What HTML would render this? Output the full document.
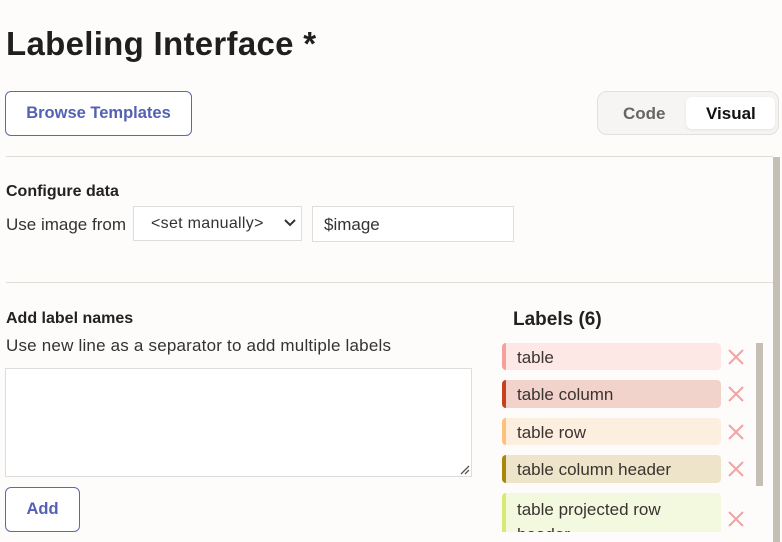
<!DOCTYPE html>
<html><head><meta charset="utf-8"><style>
*{box-sizing:border-box;margin:0;padding:0}
body{width:782px;height:542px;overflow:hidden;background:#fdfcfb;font-family:"Liberation Sans",sans-serif;color:#222;position:relative}
.a{position:absolute}
h1{position:absolute;left:6px;top:25px;font-size:33px;font-weight:bold;color:#1f1f1f;letter-spacing:0.3px}
.btn{position:absolute;border:1px solid #5b6aa8;border-radius:6px;background:#fff;color:#5361b3;font-weight:bold;font-size:16.5px;display:flex;align-items:center;justify-content:center}
.hr{position:absolute;left:6px;height:1px;background:#e2ddd6}
.b{font-weight:bold;font-size:16px;color:#222}
.t{font-size:17px;color:#333}
.lab{position:absolute;left:502px;width:219px;border-radius:4px;font-size:17px;color:#3a3330;padding-left:15px;display:flex;align-items:center;padding-top:2px}
.lab i{position:absolute;left:0;top:0;bottom:0;width:4px;border-radius:4px 0 0 4px}
.x{position:absolute;left:727px;width:18px;height:18px}
</style></head><body>
<h1>Labeling Interface *</h1>
<div class="btn" style="left:5px;top:91px;width:187px;height:45px">Browse Templates</div>
<div class="a" style="left:597px;top:91px;width:182px;height:44px;border:1px solid #e2e0dc;border-radius:10px;background:#f6f5f3"></div>
<div class="a t" style="left:623px;top:104px;color:#666;font-weight:bold">Code</div>
<div class="a" style="left:686px;top:97px;width:89px;height:32px;background:#fff;border-radius:6px;box-shadow:0 1px 3px rgba(0,0,0,.08)"></div>
<div class="a t" style="left:706px;top:104px;color:#111;font-weight:bold">Visual</div>
<div class="hr" style="top:156px;width:767px"></div>
<div class="a" style="left:773px;top:157px;width:7px;height:385px;background:#c6bfb5"></div>
<div class="a b" style="left:6px;top:183px">Configure data</div>
<div class="a t" style="left:6px;top:215px">Use image from</div>
<div class="a" style="left:133px;top:206px;width:169px;height:35px;border:1px solid #ddd;background:#fff"></div>
<div class="a t" style="left:151px;top:215px;font-size:16px;letter-spacing:0.3px">&lt;set manually&gt;</div>
<svg class="a" style="left:284px;top:218px" width="12" height="10"><path d="M1 2l5 5 5-5" stroke="#333" stroke-width="2" fill="none"/></svg>
<div class="a" style="left:312px;top:206px;width:202px;height:36px;border:1px solid #ddd;background:#fff"></div>
<div class="a t" style="left:324px;top:215px">$image</div>
<div class="hr" style="top:282px;width:767px"></div>
<div class="a b" style="left:6px;top:310px">Add label names</div>
<div class="a t" style="left:6px;top:336px;letter-spacing:0.2px">Use new line as a separator to add multiple labels</div>
<div class="a" style="left:5px;top:368px;width:467px;height:109px;border:1px solid #ddd;background:#fff"></div>
<svg class="a" style="left:460px;top:465px" width="10" height="10"><path d="M1 9L9 1M5 9L9 5" stroke="#555" stroke-width="1.3"/></svg>
<div class="btn" style="left:5px;top:487px;width:75px;height:45px">Add</div>
<div class="a" style="left:513px;top:309px;font-size:19px;font-weight:bold;color:#222">Labels (6)</div>
<div class="a" style="left:756px;top:343px;width:7px;height:143px;background:#c6bfb5"></div>
<div class="a" style="left:0;top:0;width:782px;height:542px;overflow:hidden;clip-path:inset(0 0 10px 0)">
<div class="lab" style="top:343px;height:27px;background:#fde8e6"><i style="background:#f5a09a"></i>table</div>
<div class="lab" style="top:380px;height:28px;background:#f2d3cc"><i style="background:#c8401e"></i>table column</div>
<div class="lab" style="top:418px;height:27px;background:#fdefe0"><i style="background:#fdc17a"></i>table row</div>
<div class="lab" style="top:455px;height:28px;background:#ede4c9"><i style="background:#a7880a"></i>table column header</div>
<div class="lab" style="top:493px;height:50px;background:#f2f9df;align-items:flex-start;padding-top:4px;line-height:25px"><i style="background:#d6ec70"></i>table projected row<br>header</div>
</div>
<svg class="x" style="top:348px" viewBox="0 0 18 18"><path d="M2 2L16 16M16 2L2 16" stroke="#f2a3a3" stroke-width="2"/></svg>
<svg class="x" style="top:385px" viewBox="0 0 18 18"><path d="M2 2L16 16M16 2L2 16" stroke="#f2a3a3" stroke-width="2"/></svg>
<svg class="x" style="top:423px" viewBox="0 0 18 18"><path d="M2 2L16 16M16 2L2 16" stroke="#f2a3a3" stroke-width="2"/></svg>
<svg class="x" style="top:460px" viewBox="0 0 18 18"><path d="M2 2L16 16M16 2L2 16" stroke="#f2a3a3" stroke-width="2"/></svg>
<svg class="x" style="top:510px" viewBox="0 0 18 18"><path d="M2 2L16 16M16 2L2 16" stroke="#f2a3a3" stroke-width="2"/></svg>
</body></html>
